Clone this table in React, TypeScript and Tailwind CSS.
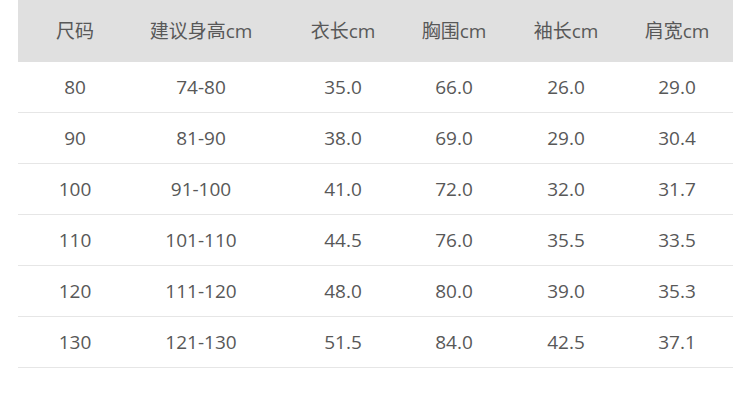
const headers = ['尺码', '建议身高cm', '衣长cm', '胸围cm', '袖长cm', '肩宽cm']

const rows = [
  ['80', '74-80', '35.0', '66.0', '26.0', '29.0'],
  ['90', '81-90', '38.0', '69.0', '29.0', '30.4'],
  ['100', '91-100', '41.0', '72.0', '32.0', '31.7'],
  ['110', '101-110', '44.5', '76.0', '35.5', '33.5'],
  ['120', '111-120', '48.0', '80.0', '39.0', '35.3'],
  ['130', '121-130', '51.5', '84.0', '42.5', '37.1'],
]

const grid = 'grid grid-cols-[114px_138px_146px_76px_148px_93px]'

export default function App() {
  return (
    <div
      className="w-[750px] h-[409px] bg-white pl-[18px] pr-[17px] text-[19px] text-[#585858]"
      style={{ fontFamily: '"Open Sans", "Noto Sans CJK SC", sans-serif' }}
    >
      <div className={`${grid} h-[62px] items-center bg-[#e0e0e0]`}>
        {headers.map((h, i) => (
          <div key={h} className={`text-center whitespace-nowrap ${i === 5 ? 'pr-[19px]' : ''}`}>
            {h}
          </div>
        ))}
      </div>
      {rows.map((r) => (
        <div key={r[0]} className={`${grid} h-[51px] items-center border-b border-[#e6e6e6]`}>
          {r.map((c, i) => (
            <div key={i} className={`text-center ${i === 5 ? 'pr-[19px]' : ''}`}>
              {c}
            </div>
          ))}
        </div>
      ))}
    </div>
  )
}
